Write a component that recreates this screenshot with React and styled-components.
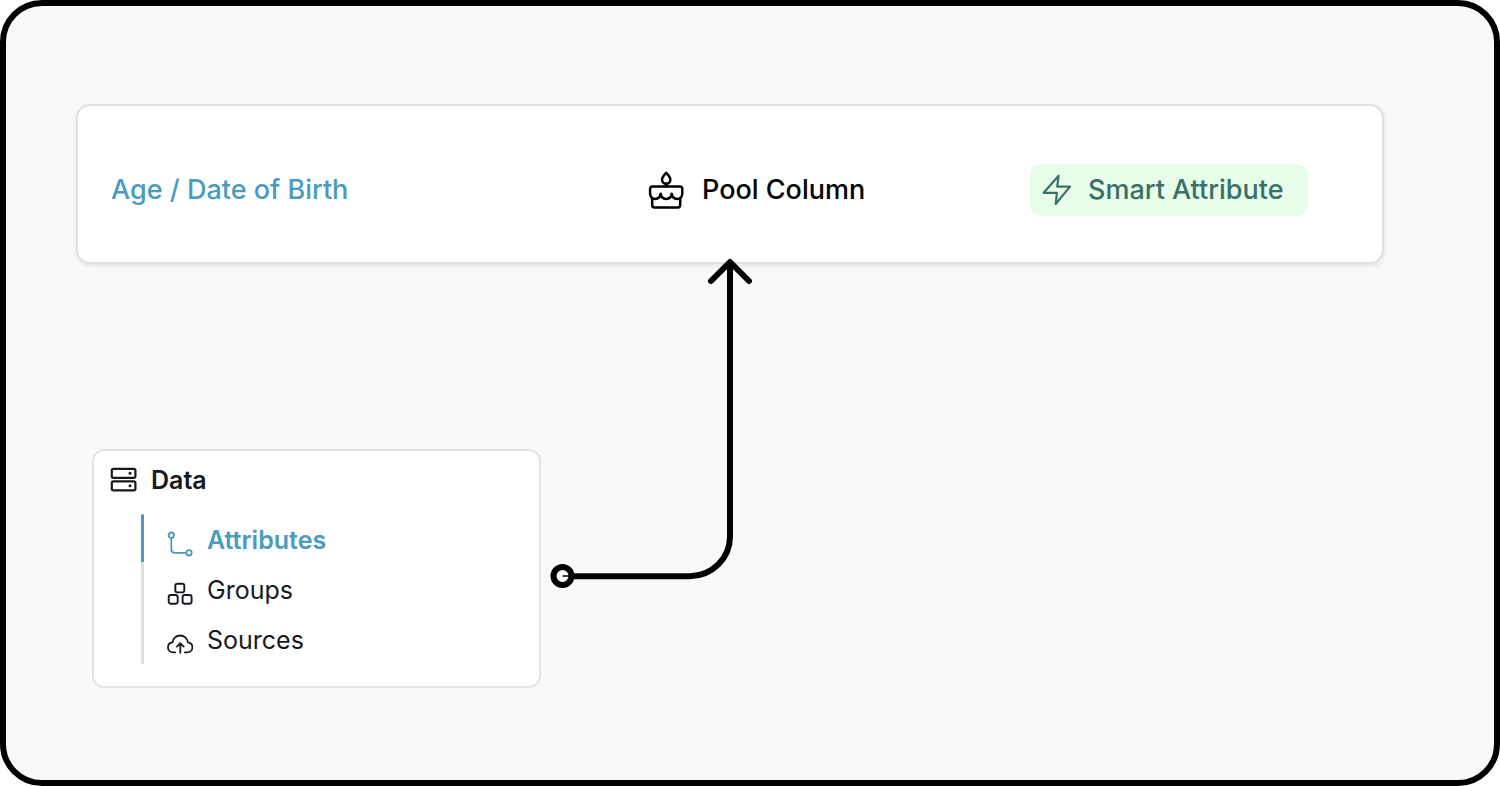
import React from "react";
import styled, { createGlobalStyle } from "styled-components";

const GlobalStyle = createGlobalStyle`
  *, *::before, *::after {
    box-sizing: border-box;
  }
  body {
    margin: 0;
    background: #fff;
    font-family: Inter, "Noto Sans", sans-serif;
    color: #16191d;
  }
  ul {
    list-style: none;
    margin: 0;
    padding: 0;
  }
  svg {
    display: block;
    flex-shrink: 0;
  }
`;

const Frame = styled.main`
  min-height: 100vh;
  padding: 98px 110px 90px 70px;
  border: 6px solid #000;
  border-radius: 42px;
  background: #f8faf9;
`;

const AttributeCard = styled.section`
  display: grid;
  grid-template-columns: 537fr 382fr 352fr;
  align-items: center;
  padding: 58px 0 46px 33px;
  border: 2px solid #dde1e0;
  border-radius: 14px;
  background: #fff;
  box-shadow: 0 2px 5px rgba(0, 0, 0, 0.08);
  font-size: 27px;
  font-weight: 500;
  line-height: 52px;
`;

const AttributeLink = styled.a`
  color: #4a9bbe;
  text-decoration: none;
`;

const ColumnType = styled.div`
  display: flex;
  align-items: center;
  gap: 18px;
  color: #000;
`;

const Badge = styled.span`
  display: inline-flex;
  justify-self: start;
  align-items: center;
  gap: 16px;
  padding: 0 24px 0 12px;
  border-radius: 12px;
  background: #e5fde9;
  color: #3a7068;
`;

const MenuArea = styled.div`
  position: relative;
  width: 449px;
  margin: 185px 0 0 16px;
`;

const Menu = styled.nav`
  padding: 13px 16px 22px;
  border: 2px solid #e1e5e4;
  border-radius: 12px;
  background: #fff;
  font-size: 25px;
  line-height: 32px;
`;

const MenuTitle = styled.div`
  display: flex;
  align-items: center;
  gap: 14px;
  font-weight: 600;
`;

const MenuList = styled.ul`
  position: relative;
  margin: 18px 0 0 31px;
  border-left: 3px solid #dde1e0;
`;

// blue part of the rail next to the selected item
const ActiveBar = styled.li`
  position: absolute;
  top: 0;
  left: -3px;
  width: 3px;
  height: 48px;
  border-radius: 2px 2px 0 0;
  background: #4a9bbe;
`;

const MenuLink = styled.a`
  display: flex;
  align-items: flex-end;
  gap: 14px;
  height: 50px;
  padding: 0 0 7px 23px;
  color: ${({ $active }) => ($active ? "#4a9bbe" : "#16191d")};
  font-weight: ${({ $active }) => ($active ? 600 : 400)};
  text-decoration: none;

  span {
    padding-bottom: 1px;
  }
`;

const Connector = styled.svg`
  position: absolute;
  left: calc(100% + 9px);
  bottom: 98px;
`;

const Icon = ({ width, height, stroke = 2, children }) => (
  <svg
    width={width}
    height={height}
    viewBox={`0 0 ${width} ${height}`}
    fill="none"
    stroke="currentColor"
    strokeWidth={stroke}
    strokeLinecap="round"
    strokeLinejoin="round"
    aria-hidden="true"
  >
    {children}
  </svg>
);

const CakeIcon = () => (
  <Icon width={36} height={38} stroke={2.5}>
    <path d="M18.2 1.8C16.4 3.8 14 6 14 8.6a4.2 4.2 0 0 0 8.4 0c0-2.6-2.4-4.8-4.2-6.8Z" />
    <path d="M18.2 12.8v2.8" />
    <path d="M4.6 15.6h27.2c1.5 0 2.5 1 2.5 2.5v4.4c0 3.2-2 5.4-4.9 5.4-3.2 0-5.4-2-5.7-5.2-.3 3.2-2.4 5.2-5.5 5.2s-5.2-2-5.5-5.2c-.3 3.2-2.5 5.2-5.7 5.2-2.9 0-4.9-2.2-4.9-5.4v-4.4c0-1.5 1-2.5 2.5-2.5Z" />
    <path d="M4.2 27v7c0 1.5.8 2.4 2.3 2.4h23.4c1.5 0 2.3-.9 2.3-2.4v-7" />
  </Icon>
);

const BoltIcon = () => (
  <Icon width={30} height={32} stroke={2.2}>
    <path d="M16.6 1.8 15.2 12.6H28L13.7 30 14.9 18.8H1.7Z" />
  </Icon>
);

const ServerIcon = () => (
  <Icon width={27} height={26} stroke={2.2}>
    <rect x="1.8" y="1.8" width="23.6" height="9" rx="1.6" />
    <rect x="1.8" y="14.4" width="23.6" height="9" rx="1.6" />
    <circle cx="20" cy="6.2" r="1.5" fill="currentColor" stroke="none" />
    <circle cx="20" cy="18.7" r="1.5" fill="currentColor" stroke="none" />
  </Icon>
);

const AttributesIcon = () => (
  <Icon width={26} height={26} stroke={1.8}>
    <circle cx="4.3" cy="4.2" r="2.7" />
    <circle cx="22" cy="21.8" r="2.7" />
    <path d="M4.3 7v11.6c0 2.200 1 3.2 3.2 3.2h11.7" />
  </Icon>
);

const GroupsIcon = () => (
  <Icon width={26} height={26} stroke={1.9}>
    <rect x="8.300" y="2.800" width="9" height="8.600" rx="2.200" />
    <rect x="1.700" y="14" width="9" height="8.800" rx="2.200" />
    <rect x="15.600" y="14" width="9" height="8.800" rx="2.200" />
  </Icon>
);

const SourcesIcon = () => (
  <Icon width={26} height={26} stroke={1.8}>
    <path d="M8.2 21.4H6.3C3.3 21.4 1 19.2 1 16.4c0-2.7 1.9-4.7 4.5-5C6 7.400 9.200 4.500 13.200 4.500c4 0 7.200 2.900 7.700 6.900 2.700.3 4.500 2.300 4.500 5 0 2.800-2.200 5-5.200 5h-2.300" />
    <path d="M13.300 21.800v-9.400M9.900 15.600l3.400-3.400 3.400 3.400" />
  </Icon>
);

const menuItems = [
  { label: "Attributes", icon: AttributesIcon, active: true },
  { label: "Groups", icon: GroupsIcon },
  { label: "Sources", icon: SourcesIcon },
];

const App = () => {
  return (
    <>
      <GlobalStyle />
      <Frame>
        <AttributeCard>
          <div>
            <AttributeLink href="#age">Age / Date of Birth</AttributeLink>
          </div>
          <ColumnType>
            <CakeIcon />
            Pool Column
          </ColumnType>
          <Badge>
            <BoltIcon />
            Smart Attribute
          </Badge>
        </AttributeCard>

        <MenuArea>
          <Menu>
            <MenuTitle>
              <ServerIcon />
              Data
            </MenuTitle>
            <MenuList>
              <ActiveBar aria-hidden="true" />
              {menuItems.map(({ label, icon: ItemIcon, active }) => (
                <li key={label}>
                  <MenuLink href={`#${label.toLowerCase()}`} $active={active}>
                    <ItemIcon />
                    <span>{label}</span>
                  </MenuLink>
                </li>
              ))}
            </MenuList>
          </Menu>

          {/* arrow from the menu up to the pool column */}
          <Connector width="204" height="334" viewBox="0 0 204 334" fill="none" stroke="#000" aria-hidden="true">
            <circle cx="12.5" cy="320" r="9" fill="#fff" strokeWidth="6" />
            <path d="M12.5 320H24" strokeWidth="1.5" />
            <path d="M21 320.2H140a40 40 0 0 0 40-40V8" strokeWidth="6" />
            <path d="M161 25 180 6l19 19" strokeWidth="6" strokeLinecap="round" strokeLinejoin="round" />
          </Connector>
        </MenuArea>
      </Frame>
    </>
  );
};

export default App;
